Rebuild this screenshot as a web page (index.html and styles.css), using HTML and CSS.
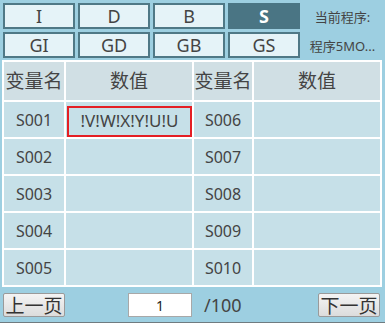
FILE: index.html
```html
<!DOCTYPE html>
<html lang="zh">
<head>
    <meta charset="UTF-8" />
    <title>变量</title>
    <link rel="stylesheet" href="styles.css">
</head>
<body>
   <div id="panel">
       <div class="top">
           <div class="tabs">
               <span class="tab">I</span>
               <span class="tab">D</span>
               <span class="tab">B</span>
               <span class="tab active">S</span>
               <span class="tab">GI</span>
               <span class="tab">GD</span>
               <span class="tab">GB</span>
               <span class="tab">GS</span>
           </div>
           <div class="info">
               <span>当前程序:</span>
               <span>程序5MO...</span>
           </div>
       </div>
       <table class="vars">
           <tr>
               <th class="c-name">变量名</th>
               <th class="c-val">数值</th>
               <th class="c-name2">变量名</th>
               <th class="c-val2">数值</th>
           </tr>
           <tr>
               <td>S001</td>
               <td class="sel"><div>!V!W!X!Y!U!U</div></td>
               <td>S006</td>
               <td></td>
           </tr>
           <tr><td>S002</td><td></td><td>S007</td><td></td></tr>
           <tr><td>S003</td><td></td><td>S008</td><td></td></tr>
           <tr><td>S004</td><td></td><td>S009</td><td></td></tr>
           <tr><td>S005</td><td></td><td>S010</td><td></td></tr>
       </table>
       <div class="pager">
           <button class="btn">上一页</button>
           <input class="page" type="text" value="1">
           <span class="total">/100</span>
           <button class="btn">下一页</button>
       </div>
   </div>
</body>
</html>
```

FILE: styles.css
```css
*{
    padding:0;
    margin:0;
    box-sizing:border-box;
}
body{
    background:#9dcfe1;
    font-family:"Noto Sans","Noto Sans CJK SC",sans-serif;
    color:#444;
}
#panel{
    width:385px;
    height:323px;
    border-bottom:1px solid #6f7b80;
}
.top{
    display:flex;
    padding:3px 0 0 3px;
}
.tabs{
    display:grid;
    grid-template-columns:repeat(4,72px);
    grid-auto-rows:26px;
    gap:3px;
}
.tab{
    border:2px solid #4f7886;
    background:#e5f3f8;
    font-size:18px;
    line-height:22px;
    text-align:center;
    color:#444;
}
.tab.active{
    background:#4a7584;
    border-color:#4a7584;
    color:#fff;
    font-weight:bold;
}
.info{
    flex:1;
    display:flex;
    flex-direction:column;
    gap:3px;
}
.info span{
    height:26px;
    line-height:28px;
    font-size:13px;
    text-align:center;
    color:#444;
    white-space:nowrap;
}
.vars{
    margin:2px 0 0 2px;
    width:380px;
    border-spacing:2px;
    background:#fff;
    table-layout:fixed;
}
.vars th{
    height:38px;
    padding:0;
    background:#d0dfe4;
    font-weight:normal;
    font-size:19px;
    line-height:22px;
    color:#444;
    white-space:nowrap;
    overflow:hidden;
}
.c-name{ width:60px; }
.c-val{ width:126px; }
.c-name2{ width:58px; }
.vars td{
    height:35px;
    background:#c6e0e8;
    font-size:16px;
    line-height:18px;
    text-align:center;
    color:#444;
    padding:0;
}
.vars td.sel{
    vertical-align:bottom;
    padding:4px 0 0 1px;
}
.sel div{
    height:31px;
    border:2px solid #e41e24;
    line-height:26px;
    text-align:center;
    font-size:17px;
}
.pager{
    display:flex;
    align-items:center;
    padding:6px 5px 0 3px;
}
.btn{
    width:62px;
    height:24px;
    padding:0;
    border:1px solid #9a9a9a;
    border-radius:2px;
    background:linear-gradient(#f4f4f4,#dcdcdc);
    font-family:"Noto Sans CJK SC",sans-serif;
    font-size:19px;
    line-height:22px;
    color:#333;
    white-space:nowrap;
}
.page{
    width:64px;
    height:24px;
    margin-left:63px;
    border:1px solid #a8a8a8;
    background:#fff;
    text-align:center;
    font-family:"Noto Sans",sans-serif;
    font-size:14px;
    color:#222;
}
.total{
    flex:1;
    margin-left:12px;
    font-size:18px;
    color:#444;
}
```
